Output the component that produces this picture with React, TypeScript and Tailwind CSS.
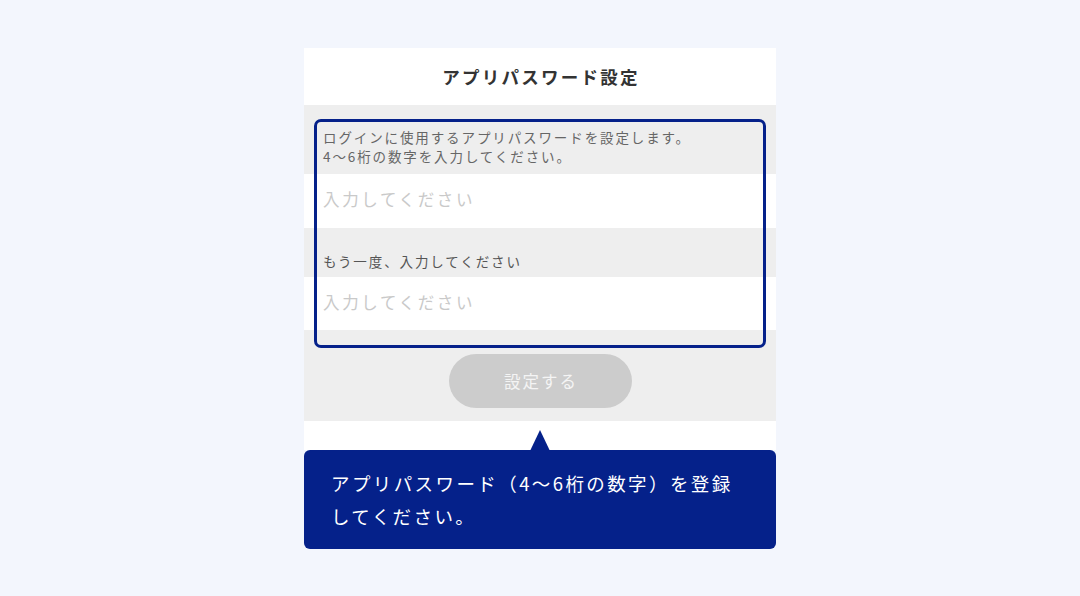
const font = { fontFamily: '"Noto Sans CJK JP", "Noto Sans", sans-serif' };

function InputRow({ placeholder, h }: { placeholder: string; h: string }) {
  return (
    <div className={`bg-white ${h} flex items-center pl-[19px] pb-[3px]`}>
      <span className="text-[16.5px] tracking-[0.16em] text-[#c9c9c9] leading-none">{placeholder}</span>
    </div>
  );
}

export default function App() {
  return (
    <div className="min-h-screen bg-[#f3f6fd] pt-12 flex justify-center" style={font}>
      <div className="w-[472px] flex flex-col">
        {/* Header */}
        <div className="bg-white h-[57px] flex items-center justify-center pl-[2px] pt-[1px]">
          <h1 className="text-[17.5px] font-bold tracking-[0.13em] text-[#333]">アプリパスワード設定</h1>
        </div>

        {/* Form */}
        <div className="relative bg-[#eeeeee] pb-[13px]">
          <div className="h-[69px] pt-[23px] pl-[19px] text-[13.5px] leading-[19px] tracking-[0.14em] text-[#666]">
            <p>ログインに使用するアプリパスワードを設定します。</p>
            <p>4〜6桁の数字を入力してください。</p>
          </div>
          <InputRow placeholder="入力してください" h="h-[54px]" />
          <div className="h-[49px] flex items-end pb-[6px] pl-[19px] text-[13.5px] leading-[19px] tracking-[0.14em] text-[#555]">
            もう一度、入力してください
          </div>
          <InputRow placeholder="入力してください" h="h-[53px]" />
          <div className="pt-[24px] flex justify-center">
            <button className="w-[183px] h-[54px] rounded-full bg-[#cccccc] text-[16.5px] tracking-[0.12em] text-[#f4f4f4] pl-[2px]">
              設定する
            </button>
          </div>

          {/* highlight frame */}
          <div className="absolute left-[10px] right-[10px] top-[14px] h-[229px] border-[3px] border-[#05218a] rounded-[7px] pointer-events-none" />
        </div>

        <div className="bg-white h-[29px]" />

        {/* Tooltip */}
        <div className="relative bg-[#05218a] rounded-[6px] h-[99px] pt-[17px] pl-[27px] text-white text-[18.5px] leading-[33px] tracking-[0.13em]">
          <svg className="absolute left-1/2 -translate-x-1/2 -top-[20px]" width="20" height="21" viewBox="0 0 20 21">
            <polygon points="10,0 20,21 0,21" fill="#05218a" />
          </svg>
          <p>
            アプリパスワード（4〜6桁の数字）を登録
            <br />
            してください。
          </p>
        </div>
      </div>
    </div>
  );
}
